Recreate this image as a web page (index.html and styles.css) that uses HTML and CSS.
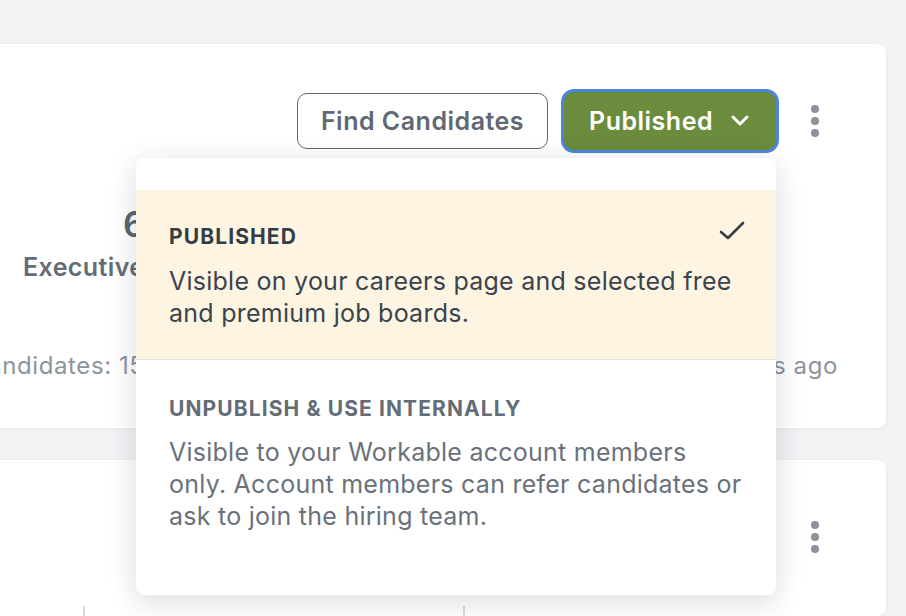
FILE: index.html
```html
<!DOCTYPE html>
<html lang="en">
<head>
    <meta charset="UTF-8">
    <meta name="viewport" content="width=device-width, initial-scale=1.0">
    <title>Jobs</title>
    <link rel="stylesheet" href="styles.css">
</head>
<body>
    <div class="board">
        <div class="card job-card">
            <div class="job-header">
                <button class="btn btn-outline">Find Candidates</button>
                <button class="btn btn-status">
                    Published
                    <svg class="chevron" width="20" height="12" viewBox="0 0 20 12">
                        <path d="M3 2 L10 9 L17 2" fill="none" stroke="#fff" stroke-width="3" stroke-linecap="round" stroke-linejoin="round"/>
                    </svg>
                </button>
                <div class="kebab"><span></span><span></span><span></span></div>
            </div>
            <div class="stat">
                <div class="stat-value">68</div>
                <div class="stat-label">Executive Assistant</div>
            </div>
            <div class="job-footer">
                <span>Candidates: 15</span>
                <span>Created 3 days ago</span>
            </div>

            <div class="status-menu">
                <div class="menu-item selected">
                    <div class="menu-title">
                        <span>PUBLISHED</span>
                        <svg width="28" height="22" viewBox="0 0 28 22">
                            <path d="M3 12 L10 18 L25 3" fill="none" stroke="#343c46" stroke-width="2.6" stroke-linecap="round" stroke-linejoin="round"/>
                        </svg>
                    </div>
                    <p>Visible on your careers page and selected free and premium job boards.</p>
                </div>
                <div class="menu-item">
                    <div class="menu-title"><span>UNPUBLISH &amp; USE INTERNALLY</span></div>
                    <p>Visible to your Workable account members only. Account members can refer candidates or ask to join the hiring team.</p>
                </div>
            </div>
        </div>

        <div class="card job-card second">
            <div class="job-header">
                <div class="kebab"><span></span><span></span><span></span></div>
            </div>
            <div class="pipeline">
                <div class="stage"></div>
                <div class="stage"></div>
            </div>
        </div>
    </div>
</body>
</html>
```

FILE: styles.css
```css
body {
    margin: 0;
    background-color: #f2f3f5;
    font-family: 'Inter', 'Noto Sans', sans-serif;
    overflow: hidden;
}

.board {
    padding: 44px 20px 0 0;
    display: flex;
    flex-direction: column;
    gap: 32px;
}

.card {
    background-color: #fff;
    border-radius: 8px;
    box-shadow: 0 1px 5px rgba(30, 40, 60, 0.06);
    margin-left: -60px;
    padding: 0 48px 0 30px;
    position: relative;
}

.job-card {
    height: 384px;
    box-sizing: border-box;
    padding-top: 49px;
}

.job-header {
    display: flex;
    justify-content: flex-end;
    align-items: center;
    gap: 16px;
    height: 56px;
    padding-right: 7px;
}

.btn {
    height: 56px;
    box-sizing: border-box;
    border-radius: 10px;
    font-family: inherit;
    font-size: 25px;
    font-weight: 600;
    letter-spacing: 0.5px;
    cursor: pointer;
    display: flex;
    align-items: center;
}

.btn-outline {
    width: 251px;
    justify-content: center;
    background: #fff;
    border: 1.5px solid #5f6873;
    color: #5f6873;
}

.btn-status {
    width: 212px;
    height: 58px;
    padding: 0 26px 0 25px;
    justify-content: space-between;
    background-color: #6a8c3c;
    border: none;
    color: #fff;
    box-shadow: 0 0 0 3px #4b86d9;
}

.kebab {
    width: 32px;
    margin-left: 7px;
    display: flex;
    flex-direction: column;
    align-items: center;
    gap: 4.5px;
}

.kebab span {
    width: 7.5px;
    height: 7.5px;
    border-radius: 50%;
    background-color: #8b929b;
}

.stat {
    display: inline-flex;
    flex-direction: column;
    align-items: center;
    margin: 55px 0 0 53px;
}

.stat-value {
    font-size: 35px;
    font-weight: 600;
    line-height: 40px;
    color: #5c6570;
}

.stat-label {
    margin-top: 8px;
    font-size: 25px;
    font-weight: 600;
    letter-spacing: 0.4px;
    line-height: 30px;
    color: #646c76;
}

.job-footer {
    display: flex;
    justify-content: space-between;
    margin-top: 69px;
    font-size: 24px;
    letter-spacing: 0.6px;
    line-height: 30px;
    color: #8d949c;
}

.status-menu {
    position: absolute;
    top: 114px;
    right: 110px;
    width: 640px;
    padding: 32px 0 31px;
    background-color: #fff;
    border-radius: 8px;
    box-shadow: 0 6px 28px rgba(20, 30, 50, 0.16);
    z-index: 2;
}

.menu-item {
    padding: 36px 30px 32px 33px;
}

.menu-item.selected {
    background-color: #fdf5e1;
    border-bottom: 1.5px solid #e1e3e6;
    padding-top: 34px;
    padding-bottom: 30px;
}

.menu-title {
    display: flex;
    justify-content: space-between;
    align-items: center;
    height: 24px;
    font-size: 21px;
    font-weight: 700;
    letter-spacing: 1.1px;
    color: #646c76;
}

.menu-title svg {
    margin-top: -10px;
}

.menu-item p {
    margin: 16px 0 0;
    font-size: 25px;
    letter-spacing: 0.25px;
    line-height: 32px;
    color: #69717b;
}

.selected .menu-title {
    color: #343c46;
}

.selected p {
    margin-top: 17px;
    color: #3b434e;
}

.second {
    height: 156px;
}

.pipeline {
    display: flex;
    margin-top: 41px;
    margin-left: 113px;
}

.stage {
    flex-shrink: 0;
    width: 378px;
    height: 40px;
    border-left: 2px solid #d8dbdf;
}
```
